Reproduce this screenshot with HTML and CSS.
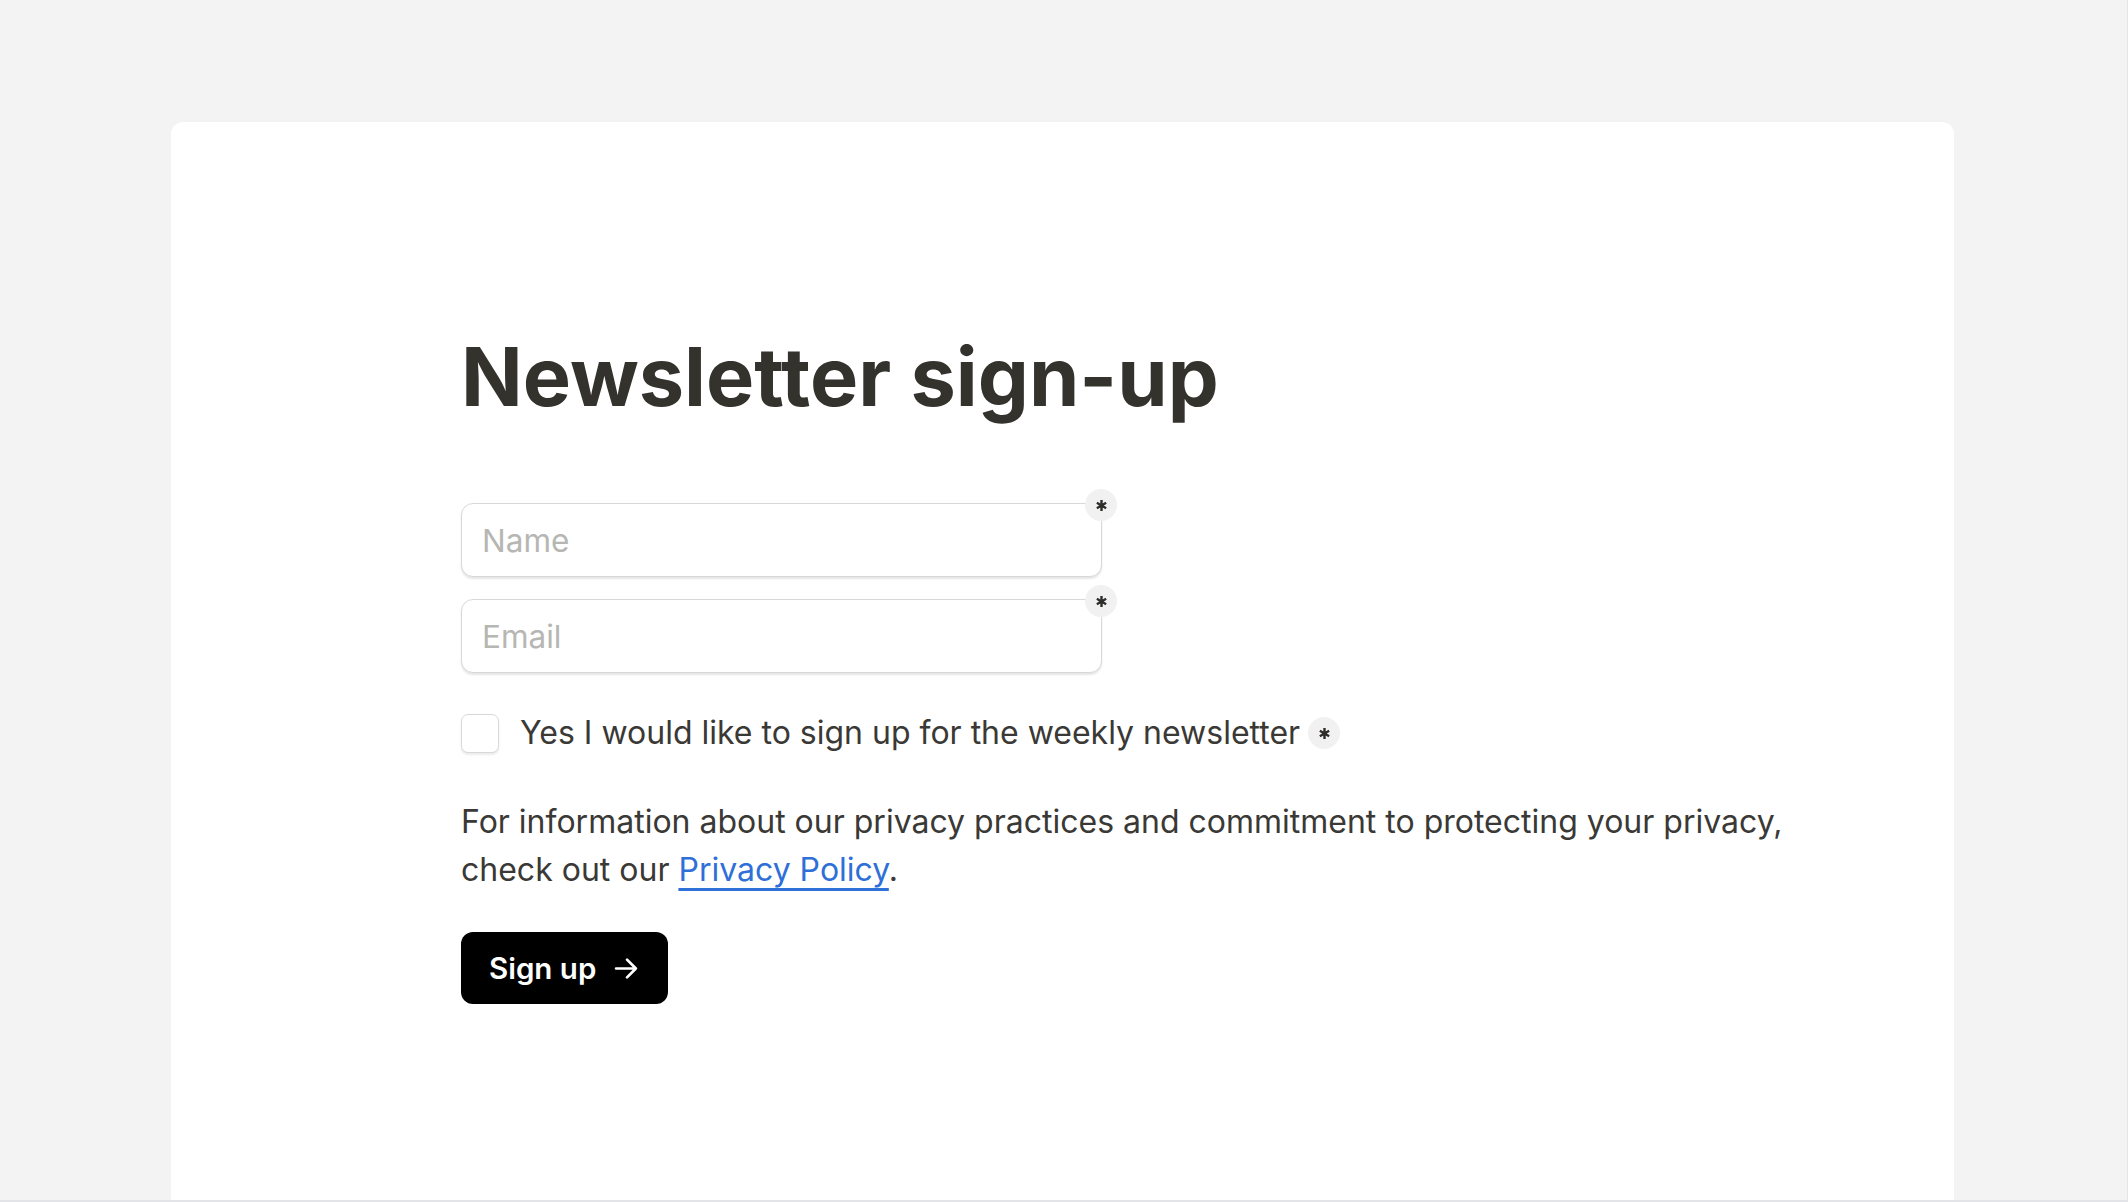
FILE: index.html
```html
<!DOCTYPE html>
<html lang="en">
<head>
<meta charset="utf-8">
<title>Newsletter sign-up</title>
<link rel="stylesheet" href="styles.css">
</head>
<body>
<div class="page">
  <main class="card">
    <h1 class="title">Newsletter sign-up</h1>
    <form class="form">
      <div class="fields">
        <div class="field">
          <input class="input" type="text" placeholder="Name">
          <span class="badge badge-corner"><svg viewBox="0 0 14 14" class="ast"><path d="M7 1.2v11.6M2 4.1l10 5.8M12 4.1L2 9.9"/></svg></span>
        </div>
        <div class="field">
          <input class="input" type="email" placeholder="Email">
          <span class="badge badge-corner"><svg viewBox="0 0 14 14" class="ast"><path d="M7 1.2v11.6M2 4.1l10 5.8M12 4.1L2 9.9"/></svg></span>
        </div>
      </div>
      <label class="check-row">
        <span class="checkbox"></span>
        <span class="check-label">Yes I would like to sign up for the weekly newsletter</span>
        <span class="badge"><svg viewBox="0 0 14 14" class="ast"><path d="M7 1.2v11.6M2 4.1l10 5.8M12 4.1L2 9.9"/></svg></span>
      </label>
      <p class="info">For information about our privacy practices and commitment to protecting your privacy, check out our <a class="link" href="#">Privacy Policy</a>.</p>
      <div class="actions">
        <button class="btn" type="button">Sign up <svg class="arrow" viewBox="0 0 24 24"><path d="M2 12h19M12.5 3.5L21 12l-8.5 8.5"/></svg></button>
      </div>
    </form>
  </main>
</div>
</body>
</html>
```
FILE: styles.css
```css
html, body {
  margin: 0;
  padding: 0;
  background: #f3f3f3;
}
body {
  font-family: Inter, "Noto Sans", "Liberation Sans", sans-serif;
  color: #3a3935;
}
.page {
  box-sizing: border-box;
  height: 1202px;
  padding: 122px 173px 0 171px;
  display: flex;
  border-bottom: 2px solid #e3e4e8;
  border-right: 1px solid #e6e6e6;
}
.card {
  flex: 1;
  background: #ffffff;
  border-radius: 12px 12px 0 0;
  padding: 207px 100px 0 290px;
}
.title {
  margin: 0;
  font-size: 81px;
  line-height: 96px;
  font-weight: 700;
  letter-spacing: 0;
  color: #33322d;
}
.form {
  margin-top: 78px;
  display: flex;
  flex-direction: column;
}
.fields {
  display: flex;
  flex-direction: column;
  gap: 22px;
}
.field {
  position: relative;
  width: 641px;
}
.input {
  box-sizing: border-box;
  display: block;
  width: 100%;
  height: 74px;
  border: 1.5px solid #d8d8d8;
  border-radius: 12px;
  padding: 0 20px;
  font-family: Inter, "Noto Sans", sans-serif;
  font-size: 31.5px;
  color: #3a3935;
  background: #fff;
  box-shadow: 0 2px 2px rgba(0,0,0,0.10);
  outline: none;
}
.input::placeholder {
  color: #b6b6b3;
}
.badge {
  box-sizing: border-box;
  width: 32px;
  height: 32px;
  border-radius: 50%;
  background: #f1f1f1;
  display: inline-flex;
  align-items: center;
  justify-content: center;
  flex-shrink: 0;
}
.badge-corner {
  position: absolute;
  top: -14px;
  right: -15px;
}
.ast {
  width: 13px;
  height: 13px;
  fill: none;
  stroke: #2e2d29;
  stroke-width: 2.6;
  stroke-linecap: butt;
}
.check-row {
  margin-top: 36px;
  display: flex;
  align-items: center;
  height: 48px;
}
.checkbox {
  box-sizing: border-box;
  width: 38px;
  height: 39px;
  border: 1.5px solid #d8d8d8;
  border-radius: 7px;
  background: #fff;
  box-shadow: 0 2px 2px rgba(0,0,0,0.08);
  margin-right: 21px;
}
.check-label {
  font-size: 32px;
  line-height: 48px;
  margin-right: 8px;
}
.info {
  margin: 41px 0 0 0;
  max-width: 1380px;
  font-size: 32px;
  line-height: 48px;
}
.link {
  color: #2f6fd8;
  text-decoration: underline;
  text-decoration-thickness: 2.5px;
  text-underline-offset: 7px;
}
.actions {
  margin-top: 38px;
  display: flex;
}
.btn {
  box-sizing: border-box;
  height: 72px;
  display: inline-flex;
  align-items: center;
  gap: 18px;
  padding: 0 29px 0 28px;
  background: #000;
  color: #fff;
  border: none;
  border-radius: 12px;
  font-family: Inter, "Noto Sans", sans-serif;
  font-size: 29.5px;
  font-weight: 600;
  cursor: pointer;
}
.arrow {
  width: 25px;
  height: 25px;
  fill: none;
  stroke: #fff;
  stroke-width: 2.6;
  stroke-linecap: round;
  stroke-linejoin: round;
}
```
